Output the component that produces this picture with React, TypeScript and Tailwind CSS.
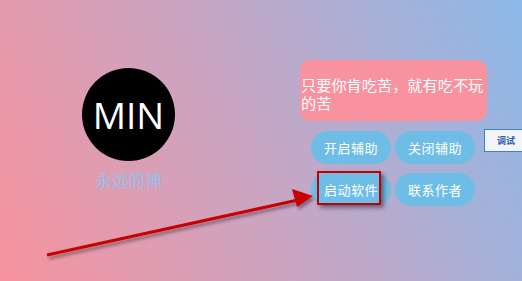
import React from 'react'

const cjk = "font-['Noto_Sans_CJK_SC',sans-serif]"

function PillButton({ label }: { label: string }) {
  return (
    <button className="h-[33px] w-[80px] rounded-[17px] bg-[#6dbde6] text-[13px] tracking-[0.5px] text-white">
      {label}
    </button>
  )
}

export default function App() {
  return (
    <div
      className={`relative flex h-[281px] w-[522px] overflow-hidden bg-[linear-gradient(66deg,#f7939e_0%,#c6a6c4_50%,#8cb9e8_100%)] ${cjk}`}
    >
      {/* Avatar */}
      <div className="ml-[82px] mt-[68px] flex w-[93px] flex-col items-center">
        <div className="flex h-[93px] w-[93px] items-center justify-center rounded-full bg-black">
          <span className="font-['Open_Sans',sans-serif] text-[37px] leading-none text-white">MIN</span>
        </div>
        <span className="mt-[9px] text-[16.5px] leading-[20px] text-[#8ec4ee]">永远的神</span>
      </div>

      {/* Right panel */}
      <div className="ml-[125px] mt-[60px] flex w-[187px] flex-col">
        <div className="flex h-[61px] items-center rounded-[10px] bg-[#f8929f] pl-px pt-[4px] text-[15.2px] leading-[18px] text-white">
          只要你肯吃苦，就有吃不玩的苦
        </div>
        <div className="ml-[11px] mt-[10px] grid w-[164px] grid-cols-2 gap-x-[4px] gap-y-[9px]">
          <PillButton label="开启辅助" />
          <PillButton label="关闭辅助" />
          <PillButton label="启动软件" />
          <PillButton label="联系作者" />
        </div>
      </div>

      {/* Debug tab */}
      <button className="absolute left-[484px] top-[129px] flex h-[23px] w-[50px] items-center border border-[#3d80d6] bg-[#f3f5fb] pl-[12px] text-[9px] font-bold text-[#2d5ea8]">
        调试
      </button>

      {/* Annotation: red box + arrow */}
      <div className="absolute left-[317px] top-[171px] h-[34px] w-[64px] border-2 border-[#c00000] shadow-[3px_3px_4px_rgba(60,40,60,0.55)]" />
      <svg className="absolute left-0 top-0" width="522" height="281" viewBox="0 0 522 281">
        <defs>
          <filter id="sh" x="-10%" y="-50%" width="120%" height="200%">
            <feDropShadow dx="2" dy="3" stdDeviation="1.8" floodColor="#3c2838" floodOpacity="0.5" />
          </filter>
        </defs>
        <g filter="url(#sh)">
          <line x1="47" y1="255" x2="298" y2="200" stroke="#c80000" strokeWidth="3" />
          <polygon points="313,196 292,189 297,207" fill="#c80000" />
        </g>
      </svg>
    </div>
  )
}
